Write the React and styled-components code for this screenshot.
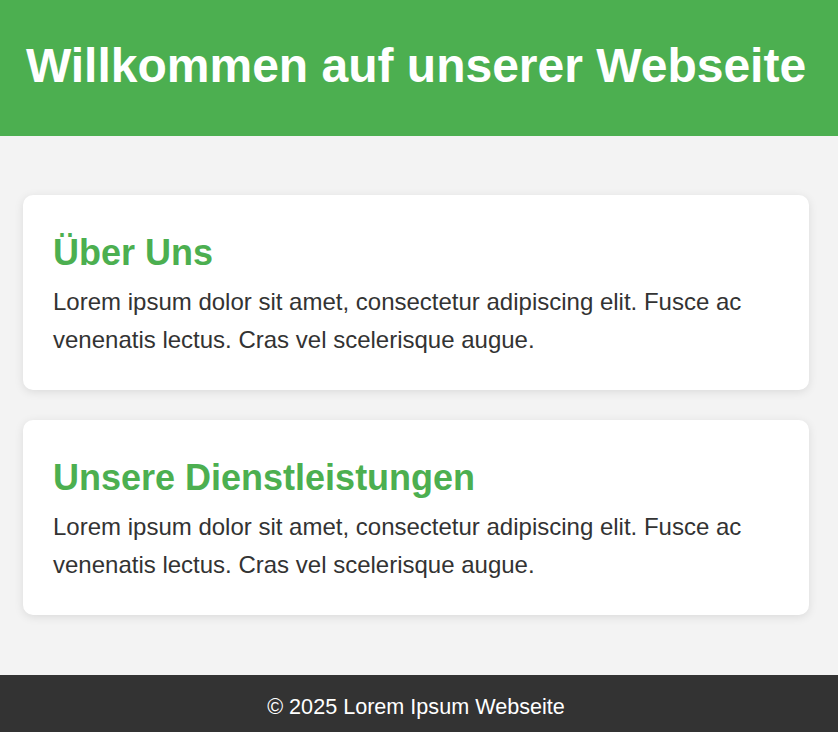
import React from 'react';
import styled, { createGlobalStyle } from 'styled-components';

const GlobalStyle = createGlobalStyle`
  body {
    margin: 0;
    font-family: "Liberation Sans", Arial, sans-serif;
    background-color: #f3f3f3;
    color: #333;
  }
`;

const Header = styled.header`
  background-color: #4caf50;
  color: #fff;
  text-align: center;
  padding: 38px 26px 43px 20px;

  h1 {
    margin: 0;
    font-size: 48px;
    font-weight: bold;
  }
`;

const Main = styled.main`
  display: flex;
  flex-direction: column;
  gap: 30px;
  padding: 59px 29px 60px 23px;
`;

const Card = styled.section`
  background-color: #fff;
  border-radius: 10px;
  padding: 30px 30px 31px;
  box-shadow: 0 2px 10px rgba(0, 0, 0, 0.1);
`;

const CardTitle = styled.h2`
  margin: 8px 0 10px;
  color: #4caf50;
  font-size: 36px;
  line-height: 40px;
`;

const CardText = styled.p`
  margin: 0;
  font-size: 24px;
  line-height: 38px;
`;

const Footer = styled.footer`
  background-color: #333;
  color: #fff;
  text-align: center;
  padding: 19px 26px 19px 20px;
  font-size: 21.6px;
`;

const sections = [
    { title: 'Über Uns' },
    { title: 'Unsere Dienstleistungen' },
];

const lorem = 'Lorem ipsum dolor sit amet, consectetur adipiscing elit. Fusce ac venenatis lectus. Cras vel scelerisque augue.';

const App = () => {
    return (
        <>
            <GlobalStyle />
            <Header>
                <h1>Willkommen auf unserer Webseite</h1>
            </Header>
            <Main>
                {sections.map((s) => (
                    <Card key={s.title}>
                        <CardTitle>{s.title}</CardTitle>
                        <CardText>{lorem}</CardText>
                    </Card>
                ))}
            </Main>
            <Footer>© 2025 Lorem Ipsum Webseite</Footer>
        </>
    );
};

export default App;
